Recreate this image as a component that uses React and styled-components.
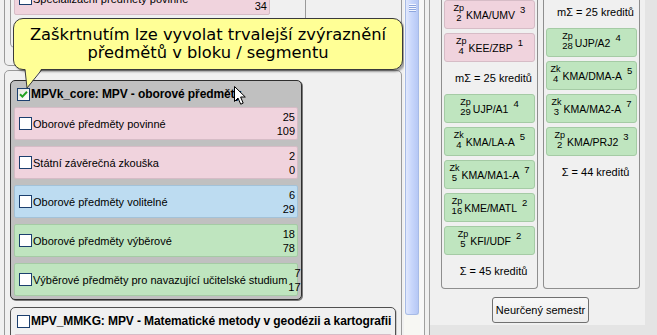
import React from 'react'
import styled, { createGlobalStyle } from 'styled-components'

const GlobalStyle = createGlobalStyle`
  html, body { margin: 0; padding: 0; }
  body {
    font-family: "Liberation Sans", Arial, sans-serif;
    font-size: 11px;
    color: #000;
    background: #f0f0f0;
  }
`

const tones = {
    pink: { bg: '#f0d3dd', border: '#d6bcc6' },
    blue: { bg: '#bddcf1', border: '#a3c2d8' },
    green: { bg: '#bfe5bf', border: '#a5cba5' },
}

const Window = styled.div`
    display: flex;
    width: 657px;
    height: 335px;
    overflow: hidden;
    background: #f0f0f0;
`

const LeftPane = styled.div`
    position: relative;
    flex: none;
    width: 404px;
    box-sizing: border-box;
    padding: 0 2px 0 4px;
    overflow: hidden;
    display: flex;
    flex-direction: column;
    gap: 4px;
`

const Panel = styled.div`
    flex: none;
    box-sizing: border-box;
    border: 1px solid #9a9a9a;
    border-radius: 5px;
    display: flex;
    flex-direction: column;
    gap: 7px;
    padding: 9px 0 0 5px;
    ${p => p.$cut && `
        height: 66px;
        padding-top: 0;
        border-top: none;
        border-top-left-radius: 0;
        border-top-right-radius: 0;
    `}
`

const Group = styled.div`
    box-sizing: border-box;
    width: ${p => p.$width}px;
    border: 1px solid ${p => (p.$active ? '#2e2e2e' : '#505050')};
    border-radius: 5px;
    background: ${p => (p.$active ? '#c0c0c0' : '#f0f0f0')};
    box-shadow: 1px 1px 0 ${p => (p.$active ? '#7a7a7a' : '#c8c8c8')};
    padding: 0 3px 3px;
    display: flex;
    flex-direction: column;
    gap: 6px;
    ${p => p.$cut && `
        border-top: none;
        border-top-left-radius: 0;
        border-top-right-radius: 0;
        border-color: #9a9a9a;
        box-shadow: none;
        height: 48px;
    `}
`

const GroupHeader = styled.div`
    display: flex;
    align-items: center;
    gap: 1px;
    height: 26px;
    margin-bottom: -6px;
    padding-left: 3px;
    font-size: 12px;
    font-weight: bold;
    letter-spacing: -0.1px;
    white-space: nowrap;
`

const Item = styled.div`
    flex: none;
    box-sizing: border-box;
    display: flex;
    align-items: center;
    gap: 1px;
    height: 33px;
    width: ${p => (p.$width ? `${p.$width}px` : 'auto')};
    margin-top: ${p => p.$shift || 0}px;
    padding: 0 2px 0 4px;
    background: ${p => tones[p.$tone].bg};
    border: 1px solid ${p => tones[p.$tone].border};
    border-radius: 2px;
    white-space: nowrap;
`

const Counts = styled.div`
    margin-left: auto;
    text-align: right;
    line-height: 14px;
`

const Box = styled.span`
    flex: none;
    width: 13px;
    height: 13px;
    box-sizing: border-box;
    border: 1px solid #1c3f6e;
    background: ${p => (p.$checked ? 'linear-gradient(135deg, #e4e4de, #fff)' : '#fff')};
    display: inline-flex;
    align-items: center;
    justify-content: center;
`

const Check = ({ checked }) => (
    <Box $checked={checked}>
        {checked && (
            <svg width="9" height="9" viewBox="0 0 9 9">
                <path d="M1 4.2 L3.4 6.6 L8 1.8" fill="none" stroke="#21a121" strokeWidth="2" />
            </svg>
        )}
    </Box>
)

const Tip = styled.div`
    position: absolute;
    left: 13px;
    top: 18px;
    width: 390px;
    height: 52px;
    box-sizing: border-box;
    background: #ffff96;
    border: 1px solid #3a3a3a;
    border-radius: 10px;
    box-shadow: 2px 2px 2px rgba(0, 0, 0, 0.35);
    display: flex;
    align-items: center;
    justify-content: center;
    text-align: center;
    font-family: "DejaVu Sans", Verdana, sans-serif;
    font-size: 16.3px;
    line-height: 18px;
`

const Tail = styled.svg`
    position: absolute;
    left: 24px;
    top: 68px;
`

const Cursor = styled.svg`
    position: absolute;
    left: 234px;
    top: 86px;
`

const ScrollTrack = styled.div`
    flex: none;
    width: 16px;
    background: #f7f7f3;
`

const Thumb = styled.div`
    height: 315px;
    margin: 0 1px;
    box-sizing: border-box;
    border: 1px solid #a7bbe6;
    border-top: none;
    border-radius: 0 0 3px 3px;
    background: linear-gradient(to right, #e2e9fd, #c9d7fb 45%, #b6c8f5);
    padding-top: 4px;
`

const Grip = styled.div`
    width: 7px;
    height: 8px;
    margin: 0 auto;
    background: repeating-linear-gradient(to bottom, #f4f7ff 0 1px, #8da6de 1px 2px);
`

const Splitter = styled.div`
    flex: none;
    width: 10px;
    background: linear-gradient(to right, #f8f8f8 0 4px, #a0a0a0 4px 5px, #f0f0f0 5px 9px, #a0a0a0 9px 10px);
`

const RightPane = styled.div`
    flex: 1;
    background: #e4e4e4;
`

const RightInner = styled.div`
    width: 215px;
    height: 325px;
    box-sizing: border-box;
    padding-left: 11px;
    background: #f0f0f0;
    display: flex;
    flex-direction: column;
    align-items: flex-start;
`

const Columns = styled.div`
    display: grid;
    grid-template-columns: 97px 97px;
    column-gap: 5px;
    height: 289px;
`

const Column = styled.div`
    box-sizing: border-box;
    border: 1px solid #8e8e8e;
    border-top: none;
    border-radius: 0 0 4px 4px;
    padding: 0 2px 4px;
    display: flex;
    flex-direction: column;
    gap: 4px;
`

const Course = styled.div`
    flex: none;
    box-sizing: border-box;
    height: 29px;
    padding-top: 3px;
    background: ${p => tones[p.$tone].bg};
    border: 1px solid ${p => tones[p.$tone].border};
    border-radius: 3px;
    display: flex;
    justify-content: center;
    align-items: flex-start;
`

const Stack = styled.div`
    display: flex;
    flex-direction: column;
    align-items: center;
    margin-right: 2px;
`

const Kind = styled.span`
    font-size: 9px;
    line-height: 9px;
`

const Term = styled.span`
    font-size: 9.5px;
    line-height: 10px;
`

const Code = styled.span`
    font-size: 10.5px;
    line-height: 13px;
    margin-top: 5px;
`

const Credits = styled.span`
    font-size: 9.5px;
    line-height: 9px;
    margin: 1px 0 0 5px;
`

const Sum = styled.div`
    flex: none;
    height: 24px;
    display: flex;
    align-items: center;
    justify-content: center;
    padding-left: 8px;
    white-space: nowrap;
`

const Button = styled.button`
    align-self: center;
    margin: 8px 0 0 -5px;
    height: 26px;
    width: 97px;
    padding: 0;
    font-family: "Liberation Sans", Arial, sans-serif;
    font-size: 11px;
    color: #000;
    background: linear-gradient(#f8f8f8, #ececec);
    border: 1px solid #707070;
    border-radius: 3px;
`

const CourseCard = ({ tone, kind, term, code, credits }) => (
    <Course $tone={tone}>
        <Stack>
            <Kind>{kind}</Kind>
            <Term>{term}</Term>
        </Stack>
        <Code>{code}</Code>
        <Credits>{credits}</Credits>
    </Course>
)

const blockItems = [
    { tone: 'pink', label: 'Oborové předměty povinné', a: 25, b: 109 },
    { tone: 'pink', label: 'Státní závěrečná zkouška', a: 2, b: 0 },
    { tone: 'blue', label: 'Oborové předměty volitelné', a: 6, b: 29 },
    { tone: 'green', label: 'Oborové předměty výběrové', a: 18, b: 78 },
    { tone: 'green', label: 'Výběrové předměty pro navazující učitelské studium', a: 7, b: 17 },
]

const columnOne = [
    { tone: 'pink', kind: 'Zp', term: 2, code: 'KMA/UMV', credits: 3 },
    { tone: 'pink', kind: 'Zp', term: 4, code: 'KEE/ZBP', credits: 1 },
    { sum: 'mΣ = 25 kreditů' },
    { tone: 'green', kind: 'Zp', term: 29, code: 'UJP/A1', credits: 4 },
    { tone: 'green', kind: 'Zk', term: 4, code: 'KMA/LA-A', credits: 5 },
    { tone: 'green', kind: 'Zk', term: 5, code: 'KMA/MA1-A', credits: 7 },
    { tone: 'green', kind: 'Zp', term: 16, code: 'KME/MATL', credits: 2 },
    { tone: 'green', kind: 'Zp', term: 5, code: 'KFI/UDF', credits: 2 },
    { sum: 'Σ = 45 kreditů' },
]

const columnTwo = [
    { sum: 'mΣ = 25 kreditů' },
    { tone: 'green', kind: 'Zp', term: 28, code: 'UJP/A2', credits: 4 },
    { tone: 'green', kind: 'Zk', term: 4, code: 'KMA/DMA-A', credits: 5 },
    { tone: 'green', kind: 'Zk', term: 3, code: 'KMA/MA2-A', credits: 7 },
    { tone: 'green', kind: 'Zp', term: 2, code: 'KMA/PRJ2', credits: 3 },
    { sum: 'Σ = 44 kreditů' },
]

const renderColumn = list =>
    list.map((c, i) => (c.sum ? <Sum key={i}>{c.sum}</Sum> : <CourseCard key={i} {...c} />))

const App = () => {
    return (
        <>
            <GlobalStyle />
            <Window>
                <LeftPane>
                    <Panel $cut>
                        <Group $cut $width={296}>
                            <Item $tone="pink" $width={256} $shift={-18}>
                                <Check />
                                Specializační předměty povinné
                                <Counts>
                                    0<br />34
                                </Counts>
                            </Item>
                        </Group>
                    </Panel>
                    <Panel>
                        <Group $active $width={292}>
                            <GroupHeader>
                                <Check checked />
                                MPVk_core: MPV - oborové předměty
                            </GroupHeader>
                            {blockItems.map(it => (
                                <Item key={it.label} $tone={it.tone}>
                                    <Check />
                                    {it.label}
                                    <Counts>
                                        {it.a}
                                        <br />
                                        {it.b}
                                    </Counts>
                                </Item>
                            ))}
                        </Group>
                        <Group $width={386}>
                            <GroupHeader>
                                <Check />
                                MPV_MMKG: MPV - Matematické metody v geodézii a kartografii
                            </GroupHeader>
                            <Item $tone="pink">
                                <Check />
                                Oborové předměty povinné
                            </Item>
                        </Group>
                    </Panel>
                    <Tip>
                        Zaškrtnutím lze vyvolat trvalejší zvýraznění
                        <br />
                        předmětů v bloku / segmentu
                    </Tip>
                    <Tail width="20" height="22" viewBox="0 0 20 22">
                        <polygon points="1,0 18,0 3,20" fill="#ffff96" />
                        <polyline points="18,1.5 3,20 1,1.5" fill="none" stroke="#3a3a3a" strokeWidth="1" />
                    </Tail>
                    <Cursor width="13" height="20" viewBox="0 0 13 20">
                        <path
                            d="M0.5 0.5 L0.5 15.5 L4 12 L6.7 18.2 L9.2 17.1 L6.6 11 L11.3 11 Z"
                            fill="#fff"
                            stroke="#000"
                            strokeWidth="1"
                        />
                    </Cursor>
                </LeftPane>
                <ScrollTrack>
                    <Thumb>
                        <Grip />
                    </Thumb>
                </ScrollTrack>
                <Splitter />
                <RightPane>
                    <RightInner>
                        <Columns>
                            <Column>{renderColumn(columnOne)}</Column>
                            <Column>{renderColumn(columnTwo)}</Column>
                        </Columns>
                        <Button>Neurčený semestr</Button>
                    </RightInner>
                </RightPane>
            </Window>
        </>
    )
}

export default App
